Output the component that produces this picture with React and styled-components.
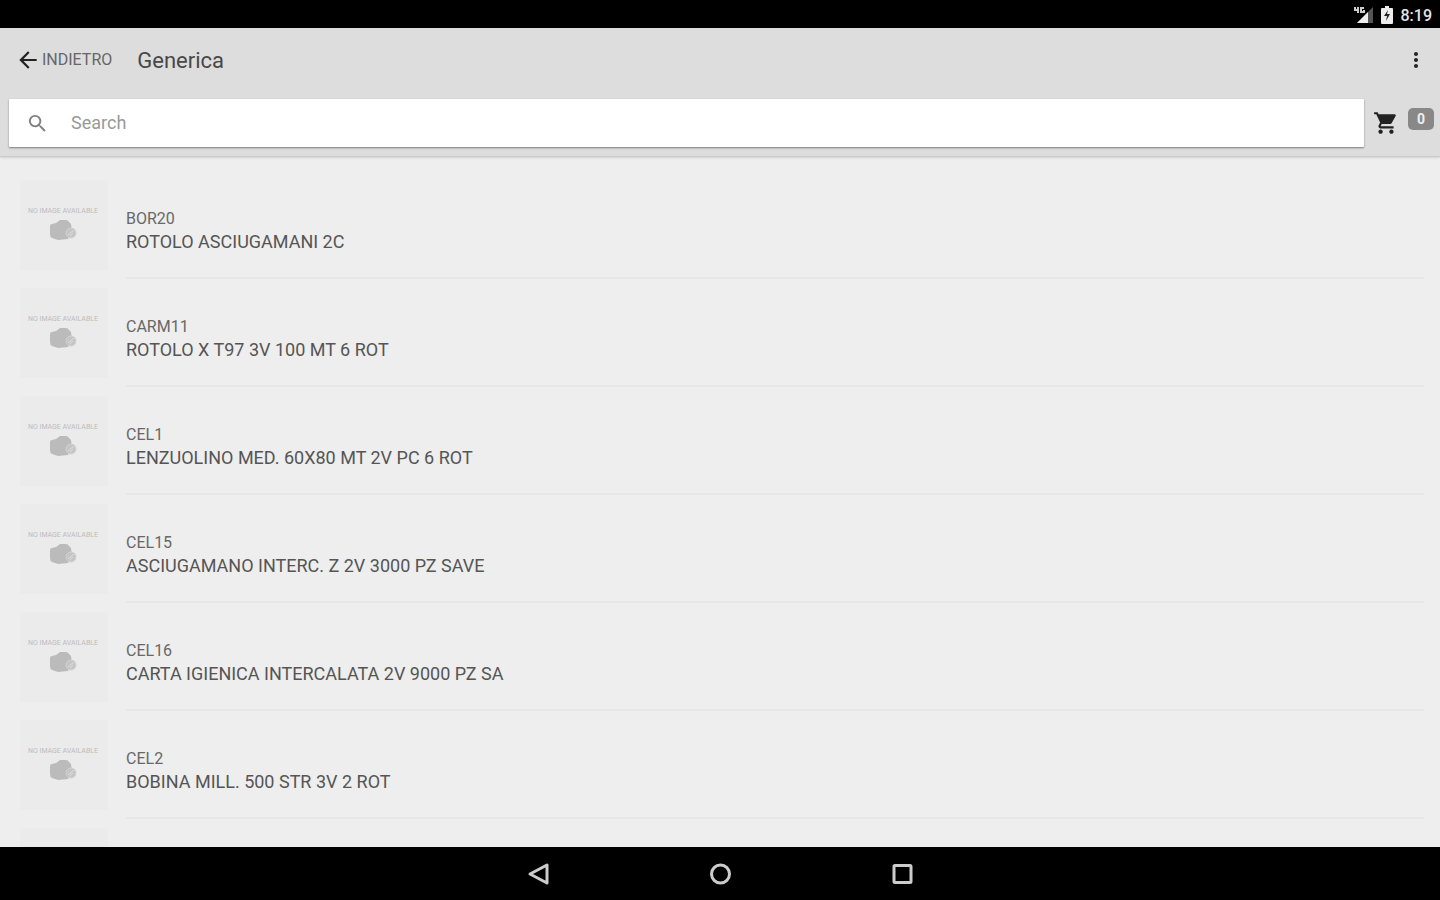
import React, { useState } from 'react';
import styled, { createGlobalStyle } from 'styled-components';
import { MdArrowBack, MdMoreVert, MdSearch, MdShoppingCart } from 'react-icons/md';

const GlobalStyle = createGlobalStyle`
  * {
    box-sizing: border-box;
  }
  body {
    margin: 0;
    background-color: #eeeeee;
    color: #555555;
    font-family: Roboto, 'Liberation Sans', sans-serif;
  }
`;

const Screen = styled.div`
  display: flex;
  flex-direction: column;
  height: 100vh;
`;

const StatusBar = styled.div`
  display: flex;
  flex: none;
  align-items: center;
  justify-content: flex-end;
  gap: 8px;
  height: 28px;
  padding: 2px 8px 0 0;
  background-color: #000000;
  color: #e4e4e4;
  font-size: 16px;
  font-weight: 500;
`;

const Head = styled.header`
  flex: none;
  padding-bottom: 9px;
  border-bottom: 1px solid #cccccc;
  background-color: #dddddd;
  box-shadow: 0 1px 2px rgba(0, 0, 0, 0.12);
`;

const Toolbar = styled.div`
  display: flex;
  align-items: center;
  height: 64px;
  padding: 0 12px 0 15px;
`;

const BackLink = styled.a`
  display: flex;
  align-items: center;
  gap: 1px;
  color: #666666;
  font-size: 16px;
  line-height: 24px;
  text-decoration: none;
  svg {
    color: #222222;
  }
`;

const Title = styled.h1`
  flex: 1;
  margin: 0 0 0 25px;
  color: #484848;
  font-size: 22px;
  font-weight: 400;
`;

const IconButton = styled.button`
  display: flex;
  align-items: center;
  justify-content: center;
  padding: 0;
  border: 0;
  background: none;
  color: ${(props) => props.$color || '#222222'};
  cursor: pointer;
`;

const SearchRow = styled.div`
  display: flex;
  align-items: center;
  padding: 7px 6px 0 9px;
`;

const SearchBox = styled.label`
  display: flex;
  flex: 1;
  align-items: center;
  gap: 22px;
  height: 48px;
  margin-right: 9px;
  padding: 0 17px;
  border-radius: 1px;
  background-color: #ffffff;
  box-shadow: 0 1px 2px rgba(0, 0, 0, 0.45);
  color: #808080;
`;

const SearchInput = styled.input`
  flex: 1;
  border: 0;
  outline: none;
  padding: 0 0 2px;
  background: none;
  color: #555555;
  font-family: inherit;
  font-size: 18px;
  &::placeholder {
    color: #999999;
    opacity: 1;
  }
`;

const Badge = styled.span`
  width: 26px;
  margin: 0 0 8px 9px;
  border-radius: 5px;
  background-color: #888888;
  color: #eeeeee;
  font-size: 14px;
  font-weight: 700;
  line-height: 22px;
  text-align: center;
`;

const List = styled.ul`
  flex: 1;
  min-height: 0;
  margin: 0;
  padding: 14px 16px 0 20px;
  overflow: hidden;
  list-style: none;
`;

const Item = styled.li`
  display: flex;
  gap: 18px;
  height: 108px;
`;

const Thumb = styled.div`
  display: flex;
  flex: none;
  flex-direction: column;
  align-items: center;
  gap: 5px;
  width: 88px;
  height: 90px;
  margin-top: 9px;
  padding: 27px 2px 0 0;
  background-color: #ebebeb;
  color: #bcbcbc;
  font-size: 7px;
  line-height: 8px;
  white-space: nowrap;
`;

const Texts = styled.div`
  flex: 1;
  padding-top: 36px;
  border-bottom: 2px solid #e7e7e7;
`;

const Code = styled.div`
  color: #686868;
  font-size: 16px;
  line-height: 24px;
`;

const Name = styled.div`
  color: #555555;
  font-size: 18px;
  line-height: 22px;
`;

const NavBar = styled.nav`
  display: flex;
  flex: none;
  align-items: center;
  justify-content: center;
  gap: 158px;
  height: 53px;
  background-color: #000000;
`;

const products = [
  { code: 'BOR20', name: 'ROTOLO ASCIUGAMANI 2C' },
  { code: 'CARM11', name: 'ROTOLO X T97 3V 100 MT 6 ROT' },
  { code: 'CEL1', name: 'LENZUOLINO MED. 60X80 MT 2V PC 6 ROT' },
  { code: 'CEL15', name: 'ASCIUGAMANO INTERC. Z 2V 3000 PZ SAVE' },
  { code: 'CEL16', name: 'CARTA IGIENICA INTERCALATA 2V 9000 PZ SA' },
  { code: 'CEL2', name: 'BOBINA MILL. 500 STR 3V 2 ROT' },
];

const SignalIcon = () => (
  <svg width="20" height="18" viewBox="0 0 20 18">
    <path d="M20 1v16H4z" fill="#555555" />
    <path d="M15 6v11H4z" fill="#eeeeee" />
    <path d="M2 1v3h3M5 1v6M11 2H8v4h3V4" fill="none" stroke="#cccccc" strokeWidth="2" />
  </svg>
);

const BatteryIcon = () => (
  <svg width="12" height="18" viewBox="0 0 12 18">
    <path d="M4 0h4v2h3q1 0 1 1v14q0 1-1 1H1q-1 0-1-1V3q0-1 1-1h3z" fill="#eeeeee" />
    <path d="M7 4L3 10h3l-1 5 4-7H6z" fill="#222222" />
  </svg>
);

const CameraIcon = () => (
  <svg width="28" height="21" viewBox="0 0 28 21">
    <path d="M1 6q0-2 2-2l4-1 4-3h6q2 0 3 2l2 2 1 8-4 7-10 1-6-2q-2-1-2-4z" fill="#bbbbbb" />
    <circle cx="22" cy="13" r="5" fill="#c5c5c5" stroke="#d2d2d2" />
    <path d="M19 15l6-5M21 16l3-3" stroke="#dddddd" strokeWidth="1" />
  </svg>
);

const App = () => {
  const [search, setSearch] = useState('');
  return (
    <>
      <GlobalStyle />
      <Screen>
        <StatusBar>
          <SignalIcon />
          <BatteryIcon />
          <span>8:19</span>
        </StatusBar>
        <Head>
          <Toolbar>
            <BackLink href="#indietro">
              <MdArrowBack size={26} />
              INDIETRO
            </BackLink>
            <Title>Generica</Title>
            <IconButton aria-label="Menu">
              <MdMoreVert size={24} />
            </IconButton>
          </Toolbar>
          <SearchRow>
            <SearchBox>
              <MdSearch size={23} />
              <SearchInput
                type="text"
                placeholder="Search"
                aria-label="Search"
                value={search}
                onChange={(e) => setSearch(e.target.value)}
              />
            </SearchBox>
            <IconButton aria-label="Carrello">
              <MdShoppingCart size={26} />
            </IconButton>
            <Badge>0</Badge>
          </SearchRow>
        </Head>
        <List>
          {products.map((product) => (
            <Item key={product.code}>
              <Thumb>
                NO IMAGE AVAILABLE
                <CameraIcon />
              </Thumb>
              <Texts>
                <Code>{product.code}</Code>
                <Name>{product.name}</Name>
              </Texts>
            </Item>
          ))}
          {/* next row, still loading */}
          <Item>
            <Thumb />
          </Item>
        </List>
        <NavBar>
          <IconButton $color="#cccccc" aria-label="Indietro">
            <svg width="24" height="24" viewBox="0 0 24 24" fill="none" stroke="currentColor">
              <path d="M21 3v18L4 12z" strokeWidth="3" strokeLinejoin="round" />
            </svg>
          </IconButton>
          <IconButton $color="#cccccc" aria-label="Home">
            <svg width="24" height="24" viewBox="0 0 24 24" fill="none" stroke="currentColor">
              <circle cx="12.500" cy="12" r="9" strokeWidth="3" />
            </svg>
          </IconButton>
          <IconButton $color="#cccccc" aria-label="Recenti">
            <svg width="24" height="24" viewBox="0 0 24 24" fill="none" stroke="currentColor">
              <rect x="4" y="3.500" width="17" height="17" rx="1" strokeWidth="3" />
            </svg>
          </IconButton>
        </NavBar>
      </Screen>
    </>
  );
};

export default App;
